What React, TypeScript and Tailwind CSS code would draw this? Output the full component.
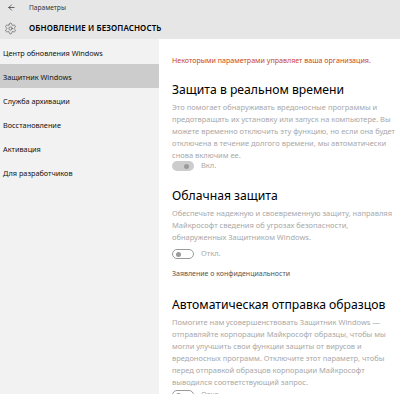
import { ArrowLeft, Settings } from 'lucide-react'

const nav = [
  'Центр обновления Windows',
  'Защитник Windows',
  'Служба архивации',
  'Восстановление',
  'Активация',
  'Для разработчиков',
]

function Toggle({ on }: { on: boolean }) {
  return on ? (
    <div className="w-[22px] h-[10px] rounded-full bg-[#cccccc] flex items-center justify-end pr-[5px]">
      <div className="w-[5px] h-[5px] rounded-full bg-[#9a9a9a]" />
    </div>
  ) : (
    <div className="w-[22px] h-[10px] rounded-full border border-[#9a9a9a] flex items-center pl-[3px]">
      <div className="w-[5px] h-[5px] rounded-full bg-[#9a9a9a]" />
    </div>
  )
}

export default function App() {
  return (
    <div className="w-[400px] h-[394px] overflow-hidden bg-white text-[#000] font-['Noto_Sans',sans-serif] flex flex-col">
      <div className="bg-[#e6e6e6] h-[39px] shrink-0 flex flex-col">
        <div className="h-[15px] flex items-center">
          <ArrowLeft size={9} strokeWidth={1.5} className="ml-[7px] mr-[13px]" />
          <span className="text-[6.6px] text-[#333]">Параметры</span>
        </div>
        <div className="flex-1 flex items-center pt-[2px]">
          <Settings size={13} strokeWidth={1} className="ml-[4px] mr-[12px] text-[#333]" />
          <span className="text-[8px] font-semibold tracking-[0.1px]">ОБНОВЛЕНИЕ И БЕЗОПАСНОСТЬ</span>
        </div>
      </div>

      <div className="flex flex-1">
        <div className="w-[159px] bg-[#f2f2f2] shrink-0 pt-[1px]">
          {nav.map((n, i) => (
            <div key={n} className={`h-[24px] flex items-center px-[3px] pt-[2px] text-[7.3px] text-[#111] ${i === 1 ? 'bg-[#cccccc]' : ''}`}>
              {n}
            </div>
          ))}
        </div>

        <div className="flex-1 pl-[13px] pt-[15px]">
          <p className="text-[7.1px] text-[#c8461b] leading-[12px]">Некоторыми параметрами управляет ваша организация.</p>

          <h2 className="text-[12.2px] leading-[18px] mt-[15px]">Защита в реальном времени</h2>
          <p className="text-[7.5px] text-[#a8a8a8] leading-[12px] mt-[2px]">
            Это помогает обнаруживать вредоносные программы и<br />
            предотвращать их установку или запуск на компьютере. Вы<br />
            можете временно отключить эту функцию, но если она будет<br />
            отключена в течение долгого времени, мы автоматически<br />
            снова включим ее.
          </p>
          <div className="flex items-center gap-[7px] h-[10px]">
            <Toggle on />
            <span className="text-[7.5px] text-[#a8a8a8]">Вкл.</span>
          </div>

          <h2 className="text-[12.2px] leading-[18px] mt-[16px]">Облачная защита</h2>
          <p className="text-[7.5px] text-[#a8a8a8] leading-[12px] mt-[2px]">
            Обеспечьте надежную и своевременную защиту, направляя<br />
            Майкрософт сведения об угрозах безопасности,<br />
            обнаруженных Защитником Windows.
          </p>
          <div className="flex items-center gap-[7px] mt-[6px] h-[10px]">
            <Toggle on={false} />
            <span className="text-[7.5px] text-[#a8a8a8]">Откл.</span>
          </div>
          <p className="text-[7px] text-[#555] leading-[12px] mt-[9px]">Заявление о конфиденциальности</p>

          <h2 className="text-[12.2px] leading-[18px] mt-[16px]">Автоматическая отправка образцов</h2>
          <p className="text-[7.5px] text-[#a8a8a8] leading-[12px] mt-[2px]">
            Помогите нам усовершенствовать Защитник Windows —<br />
            отправляйте корпорации Майкрософт образцы, чтобы мы<br />
            могли улучшить свои функции защиты от вирусов и<br />
            вредоносных программ. Отключите этот параметр, чтобы<br />
            перед отправкой образцов корпорации Майкрософт<br />
            выводился соответствующий запрос.
          </p>
          <div className="flex items-center gap-[7px] mt-[2px] h-[10px]">
            <Toggle on={false} />
            <span className="text-[7.5px] text-[#a8a8a8]">Откл.</span>
          </div>
        </div>
      </div>
    </div>
  )
}
